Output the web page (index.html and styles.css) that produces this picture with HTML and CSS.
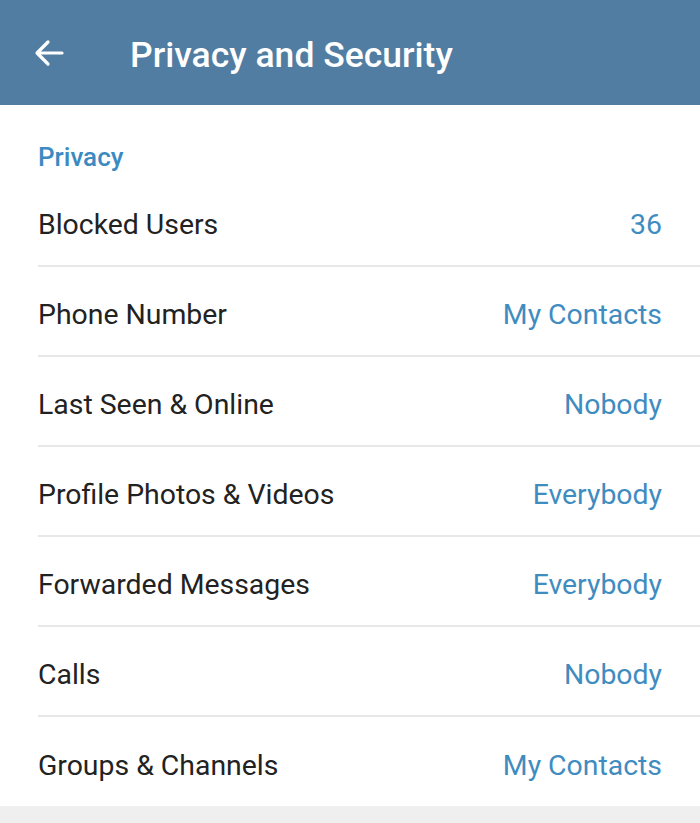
FILE: index.html
```html
<!DOCTYPE html>
<html lang="en">
<head>
    <meta charset="UTF-8">
    <meta name="viewport" content="width=device-width, initial-scale=1.0">
    <title>Privacy and Security</title>
    <link rel="stylesheet" href="styles.css">
</head>
<body>
    <div class="header">
        <svg class="back" width="30" height="28" viewBox="0 0 30 28">
            <path d="M28 14H4M14 3L3 14l11 11" fill="none" stroke="#fff" stroke-width="3.2" stroke-linecap="round" stroke-linejoin="round"/>
        </svg>
        <span class="title">Privacy and Security</span>
    </div>
    <div class="section">
        <div class="section-title">Privacy</div>
        <div class="row"><span class="label">Blocked Users</span><span class="value">36</span></div>
        <div class="row"><span class="label">Phone Number</span><span class="value">My Contacts</span></div>
        <div class="row"><span class="label">Last Seen &amp; Online</span><span class="value">Nobody</span></div>
        <div class="row"><span class="label">Profile Photos &amp; Videos</span><span class="value">Everybody</span></div>
        <div class="row"><span class="label">Forwarded Messages</span><span class="value">Everybody</span></div>
        <div class="row"><span class="label">Calls</span><span class="value">Nobody</span></div>
        <div class="row last"><span class="label">Groups &amp; Channels</span><span class="value">My Contacts</span></div>
    </div>
</body>
</html>
```

FILE: styles.css
```css
body {
    margin: 0;
    background: #efefef;
    font-family: Roboto, "Liberation Sans", sans-serif;
}
.header {
    height: 105px;
    background: #517da2;
    display: flex;
    align-items: center;
    padding-left: 34px;
    box-sizing: border-box;
    padding-top: 4px;
}
.back {
    margin-top: -4px;
    margin-right: 66px;
}
.title {
    color: #fff;
    font-size: 35.5px;
    font-weight: 500;
}
.section {
    background: #fff;
    padding-left: 38px;
    height: 701px;
}
.section-title {
    height: 72px;
    box-sizing: border-box;
    padding-top: 37px;
    color: #3b8ac1;
    font-size: 26px;
    font-weight: 500;
}
.row {
    height: 90px;
    display: flex;
    justify-content: space-between;
    align-items: center;
    border-bottom: 2px solid #e8e8e8;
    box-sizing: border-box;
    padding-top: 6px;
    padding-right: 38px;
}
.row.last {
    border-bottom: none;
}
.label {
    color: #222;
    font-size: 28.4px;
}
.value {
    color: #3f8cc0;
    font-size: 28.4px;
}
```
